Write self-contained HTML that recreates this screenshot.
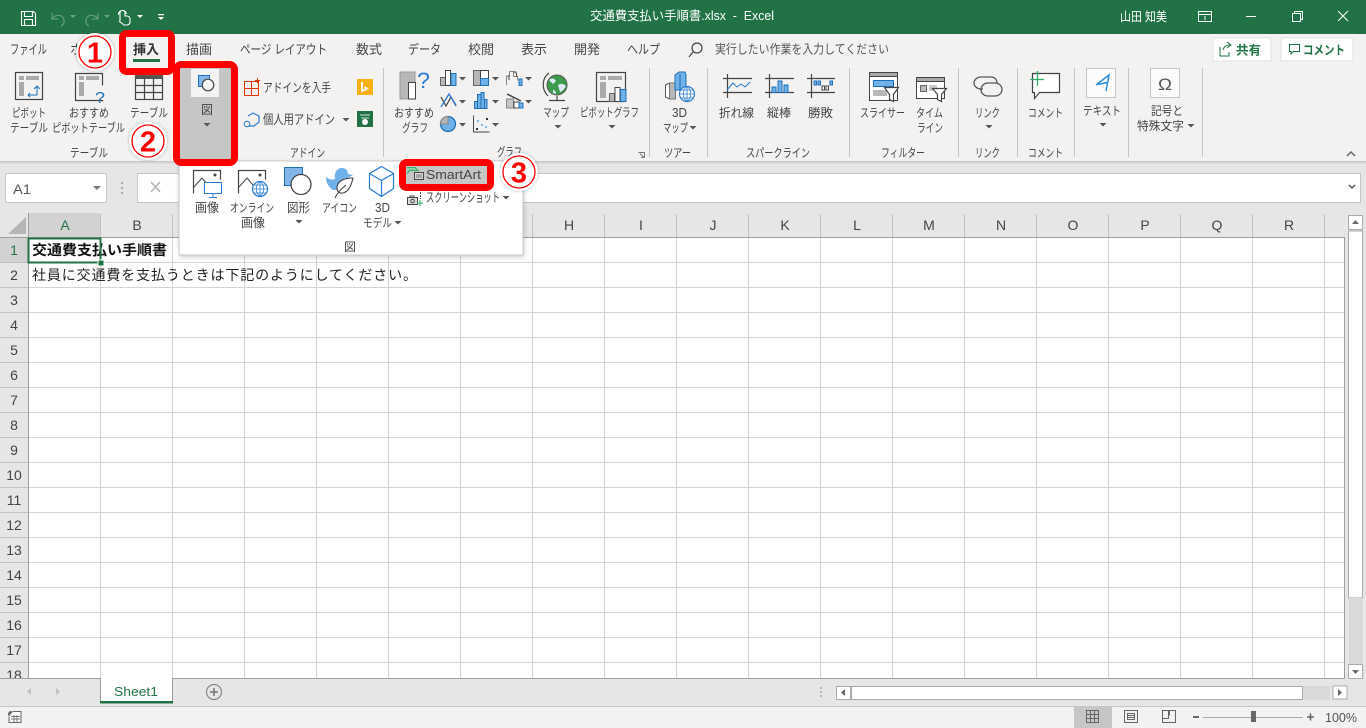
<!DOCTYPE html>
<html lang="ja"><head><meta charset="utf-8"><title>Excel</title>
<style>
html,body{margin:0;padding:0;background:#fff;overflow:hidden;width:1366px;height:728px}
svg{display:block}
text{font-family:"Liberation Sans","Noto Sans CJK JP",sans-serif;font-size:12px;fill:#444}
.h{font-size:14px;fill:#444;text-anchor:middle}
.r{font-size:14px;fill:#444;text-anchor:middle}
.n{font-weight:700;font-size:29px;fill:#f00;text-anchor:middle}
.s{fill:none;stroke:#444;stroke-width:1.2}
</style></head><body>
<svg xmlns="http://www.w3.org/2000/svg" width="1366" height="728" viewBox="0 0 1366 728">
<defs>
<path id="a" d="M-3.500 0h7l-3.500 3.500z" fill="#555"/>
</defs>
<!-- base bands -->
<rect width="1366" height="728" fill="#fff"/>
<rect width="1366" height="34" fill="#217346"/>
<rect y="34" width="1366" height="127" fill="#f3f2f1"/>
<rect y="161" width="1366" height="52" fill="#e6e6e6"/>
<rect y="161" width="1366" height="1" fill="#c9c9c9"/><rect y="162" width="1366" height="1" fill="#d5d5d5"/><rect y="163" width="1366" height="1" fill="#dedede"/>
<rect y="213" width="1345" height="24" fill="#e6e6e6"/>
<rect y="238" width="28" height="440" fill="#e6e6e6"/>
<rect x="28" y="213" width="72" height="24" fill="#d2d2d2"/>
<rect y="238" width="28" height="25" fill="#d2d2d2"/>
<path d="M26 217v17H8z" fill="#b5b5b5"/>

<!-- grid -->
<g stroke="#d4d4d4" stroke-width="1" shape-rendering="crispEdges">
<path d="M100.500 238V678M172.500 238V678M244.500 238V678M316.500 238V678M388.500 238V678M460.500 238V678M532.500 238V678M604.500 238V678M676.500 238V678M748.500 238V678M820.500 238V678M892.500 238V678M964.500 238V678M1036.500 238V678M1108.500 238V678M1180.500 238V678M1252.500 238V678M1324.500 238V678"/>
<path d="M29 262.500H1344M29 287.500H1344M29 312.500H1344M29 337.500H1344M29 362.500H1344M29 387.500H1344M29 412.500H1344M29 437.500H1344M29 462.500H1344M29 487.500H1344M29 512.500H1344M29 537.500H1344M29 562.500H1344M29 587.500H1344M29 612.500H1344M29 637.500H1344M29 662.500H1344"/>
</g>
<g stroke="#c2c2c2" shape-rendering="crispEdges">
<path d="M100.500 214V237M172.500 214V237M244.500 214V237M316.500 214V237M388.500 214V237M460.500 214V237M532.500 214V237M604.500 214V237M676.500 214V237M748.500 214V237M820.500 214V237M892.500 214V237M964.500 214V237M1036.500 214V237M1108.500 214V237M1180.500 214V237M1252.500 214V237M1324.500 214V237"/>
<path d="M0 262.500H28M0 287.500H28M0 312.500H28M0 337.500H28M0 362.500H28M0 387.500H28M0 412.500H28M0 437.500H28M0 462.500H28M0 487.500H28M0 512.500H28M0 537.500H28M0 562.500H28M0 587.500H28M0 612.500H28M0 637.500H28M0 662.500H28"/>
</g>
<path d="M0 237.500H1344.500V678.500H0M28.500 213V678" fill="none" stroke="#9e9e9e" shape-rendering="crispEdges"/>

<!-- column headers -->
<text class="h" x="65" y="230" style="fill:#217346">A</text><text class="h" x="137" y="230">B</text>
<text class="h" x="569" y="230">H</text><text class="h" x="641" y="230">I</text><text class="h" x="713" y="230">J</text><text class="h" x="785" y="230">K</text><text class="h" x="857" y="230">L</text><text class="h" x="929" y="230">M</text><text class="h" x="1001" y="230">N</text><text class="h" x="1073" y="230">O</text><text class="h" x="1145" y="230">P</text><text class="h" x="1217" y="230">Q</text><text class="h" x="1289" y="230">R</text>
<!-- row headers -->
<text class="r" x="14" y="255" style="fill:#217346">1</text><text class="r" x="14" y="280">2</text><text class="r" x="14" y="305">3</text><text class="r" x="14" y="330">4</text><text class="r" x="14" y="355">5</text><text class="r" x="14" y="380">6</text><text class="r" x="14" y="405">7</text><text class="r" x="14" y="430">8</text><text class="r" x="14" y="455">9</text><text class="r" x="14" y="480">10</text><text class="r" x="14" y="505">11</text><text class="r" x="14" y="530">12</text><text class="r" x="14" y="555">13</text><text class="r" x="14" y="580">14</text><text class="r" x="14" y="605">15</text><text class="r" x="14" y="630">16</text><text class="r" x="14" y="655">17</text><text class="r" x="14" y="680">18</text>
<rect x="0" y="678.500" width="1366" height="28" fill="#e6e6e6"/>
<path d="M0 678.500H1344.500" stroke="#9e9e9e" shape-rendering="crispEdges"/>

<!-- cell contents -->
<text x="32" y="255" textLength="135" lengthAdjust="spacingAndGlyphs" style="font-size:14px;font-weight:700;fill:#111">交通費支払い手順書</text>
<text x="32" y="280" textLength="385" lengthAdjust="spacing" style="font-size:14px;fill:#222">社員に交通費を支払うときは下記のようにしてください。</text>
<rect x="28.500" y="238.500" width="72" height="24" fill="none" stroke="#217346" stroke-width="2"/>
<rect x="98" y="260" width="6" height="6" fill="#217346" stroke="#fff"/>

<!-- title bar -->
<g fill="none" stroke="#fff" stroke-width="1.100">
<path d="M21.500 11.500h12l2 2v12h-14zM24.500 11.500v5h8v-5M24.500 25.500v-6h8v6"/>
<path d="M52 13v6h6M52 19c3-5 11-5 12 1 .5 3-1 5-3 6" stroke="#6ba384"/>
<path d="M98 13v6h-6M98 19c-3-5-11-5-12 1-.5 3 1 5 3 6" stroke="#6ba384"/>
<path d="M120 21v-8a2 2 0 0 1 5 0v3h2a3 3 0 0 1 3 3v3a3 3 0 0 1-3 3h-3l-5-4M118.500 15a4 4 0 1 1 8-1"/>
</g>
<g fill="#6ba384"><path d="M70 15h6l-3 3zM104 15h6l-3 3z"/></g>
<path d="M137 15h6l-3 3z" fill="#fff"/>
<path d="M158 14h6v1.200h-6zM158 17h6l-3 3z" fill="#fff"/>
<text x="590" y="20" textLength="184" lengthAdjust="spacingAndGlyphs" style="font-size:12.500px;fill:#fff">交通費支払い手順書.xlsx&#160;&#160;-&#160;&#160;Excel</text>
<text x="1120" y="21" textLength="47" lengthAdjust="spacingAndGlyphs" style="font-size:12.500px;fill:#fff">山田 知美</text>
<g fill="none" stroke="#fff" shape-rendering="crispEdges">
<path d="M1198.500 11.500h13v10h-13zM1198.500 14.500h13M1205 20v-4"/>
<path d="M1246 16.500h10"/>
<path d="M1292.500 13.500h8v8h-8zM1294.500 13.500v-2h8v8h-2"/>
</g>
<path d="M1338 11l10 10M1348 11l-10 10" stroke="#fff" fill="none"/>

<!-- tabs -->
<text x="10" y="54" textLength="37" lengthAdjust="spacingAndGlyphs" style="font-size:13px">ファイル</text>
<text x="70" y="54" textLength="38" lengthAdjust="spacingAndGlyphs" style="font-size:13px">ホーム</text>
<text x="186" y="54" textLength="26" lengthAdjust="spacingAndGlyphs" style="font-size:13px">描画</text>
<text x="240" y="54" textLength="87" lengthAdjust="spacingAndGlyphs" style="font-size:13px">ページ レイアウト</text>
<text x="356" y="54" textLength="26" lengthAdjust="spacingAndGlyphs" style="font-size:13px">数式</text>
<text x="408" y="54" textLength="33" lengthAdjust="spacingAndGlyphs" style="font-size:13px">データ</text>
<text x="468" y="54" textLength="26" lengthAdjust="spacingAndGlyphs" style="font-size:13px">校閲</text>
<text x="521" y="54" textLength="26" lengthAdjust="spacingAndGlyphs" style="font-size:13px">表示</text>
<text x="574" y="54" textLength="26" lengthAdjust="spacingAndGlyphs" style="font-size:13px">開発</text>
<text x="627" y="54" textLength="33" lengthAdjust="spacingAndGlyphs" style="font-size:13px">ヘルプ</text>
<circle cx="697" cy="48" r="5" class="s"/><path d="M693 52l-4 5" class="s"/>
<text x="715" y="53.500" textLength="174" lengthAdjust="spacingAndGlyphs" style="font-size:12.500px;fill:#555">実行したい作業を入力してください</text>

<rect x="1213" y="38" width="58" height="23" rx="1" fill="#fff" stroke="#e2e2e2"/>
<path d="M1220 47v9h9v-4M1223 50c1-4 4-5 7-5M1227 42l4 3-4 3" fill="none" stroke="#217346"/>
<text x="1236" y="54.500" textLength="25" lengthAdjust="spacingAndGlyphs" style="font-size:12.500px;font-weight:700;fill:#217346">共有</text>
<rect x="1281" y="38" width="72" height="23" rx="1" fill="#fff" stroke="#e2e2e2"/>
<path d="M1289.500 44.500h10v7h-6l-2.500 2.500v-2.500h-1.500z" fill="none" stroke="#217346"/>
<text x="1303" y="54.500" textLength="42" lengthAdjust="spacingAndGlyphs" style="font-size:12.500px;font-weight:700;fill:#217346">コメント</text>

<!-- group separators -->
<path d="M383.500 68V157M649.500 68V157M707.500 68V157M849.500 68V157M958.500 68V157M1017.500 68V157M1074.500 68V157M1128.500 68V157M1202.500 68V157" stroke="#c6c6c6" shape-rendering="crispEdges"/>

<!-- table group -->
<rect x="15.500" y="72.500" width="27" height="27" fill="#fff" class="s"/>
<rect x="19" y="76" width="5" height="4" fill="#aaa"/><rect x="26" y="76" width="13" height="4" fill="#aaa"/><rect x="19" y="82" width="5" height="14" fill="#aaa"/>
<path d="M28 95h9v-8M34 89l3-3 3 3M28 95l2-2M28 95l2 2" fill="none" stroke="#1d70b8"/>
<text x="12" y="117" textLength="34" lengthAdjust="spacingAndGlyphs">ピボット</text>
<text x="10" y="132" textLength="38" lengthAdjust="spacingAndGlyphs">テーブル</text>
<path d="M103 100.500h-27.500v-27h27v12" class="s"/>
<rect x="79" y="76" width="5" height="4" fill="#aaa"/><rect x="86" y="76" width="13" height="4" fill="#aaa"/><rect x="79" y="82" width="5" height="14" fill="#aaa"/>
<text x="95" y="103" style="font-size:16px;fill:#1d70b8" textLength="10" lengthAdjust="spacingAndGlyphs">?</text>
<text x="69" y="117" textLength="40" lengthAdjust="spacingAndGlyphs">おすすめ</text>
<text x="52" y="132" textLength="73" lengthAdjust="spacingAndGlyphs">ピボットテーブル</text>
<rect x="135.500" y="75.500" width="27" height="24" fill="#fff" class="s"/>
<rect x="135" y="75" width="28" height="4" fill="#555"/>
<path d="M135 85.500h28M135 92.500h28M144.500 79v21M153.500 79v21" class="s"/>
<text x="130" y="117" textLength="38" lengthAdjust="spacingAndGlyphs">テーブル</text>
<text x="70" y="157" textLength="38" lengthAdjust="spacingAndGlyphs">テーブル</text>

<!-- add-ins group -->
<path d="M244.500 81.500v14h14v-14zM251.500 81.500v14M244.500 88.500h14" fill="none" stroke="#d83b01"/>
<path d="M255 80.500h5M257.500 78v5" stroke="#d83b01"/>
<text x="263" y="92" textLength="68" lengthAdjust="spacingAndGlyphs" style="font-size:12.500px">アドインを入手</text>
<rect x="357" y="79" width="16" height="16" fill="#fbb116"/>
<path d="M362 82v9l5-2.500-2.500-1.500" fill="none" stroke="#fff" stroke-width="1.800"/>
<path d="M248 116l5-3 6 3v6l-5 4h-5" fill="none" stroke="#2b7cd3" stroke-width="1.200"/>
<circle cx="247" cy="124" r="2.800" fill="none" stroke="#2b7cd3"/>
<text x="263" y="124" textLength="72" lengthAdjust="spacingAndGlyphs" style="font-size:13px">個人用アドイン</text>
<use href="#a" x="346" y="118"/>
<rect x="357" y="111" width="16" height="16" fill="#217346"/>
<path d="M360 115h10M361 118h8" stroke="#cfe5d8"/><circle cx="365" cy="122" r="3" fill="#fff"/>
<text x="290" y="157" textLength="35" lengthAdjust="spacingAndGlyphs">アドイン</text>

<!-- chart group -->
<rect x="400" y="72" width="15" height="27" fill="#b7b7b7" stroke="#999"/><rect x="408.500" y="82.500" width="7" height="16.500" fill="#fff" stroke="#444"/>
<text x="417" y="88" style="font-size:22px;fill:#2b7cd3" textLength="13" lengthAdjust="spacingAndGlyphs">?</text>
<text x="394" y="117" textLength="40" lengthAdjust="spacingAndGlyphs">おすすめ</text>
<text x="402" y="132" textLength="26" lengthAdjust="spacingAndGlyphs">グラフ</text>
<!-- small chart icons -->
<rect x="440.500" y="77.500" width="5" height="8" fill="#b7b7b7" stroke="#666"/><rect x="445.500" y="70.500" width="5" height="15" fill="#fff" stroke="#444"/><rect x="451" y="73.500" width="5" height="12" fill="#6fb1e8" stroke="#1d70b8"/>
<use href="#a" x="462.500" y="77"/>
<rect x="473.500" y="70.500" width="7" height="15" fill="#b7b7b7" stroke="#666"/><rect x="480.500" y="70.500" width="8" height="8" fill="#fff" stroke="#444"/><rect x="480.500" y="78.500" width="8" height="7" fill="#6fb1e8" stroke="#1d70b8"/>
<use href="#a" x="495.500" y="77"/>
<path d="M506.500 85v-9h3v-4.500h4v5h4v4" fill="none" stroke="#888"/><path d="M509 80v-5M513 72h3l1 5" fill="none" stroke="#444"/><rect x="519" y="79" width="3" height="6.500" fill="#6fb1e8" stroke="#1d70b8"/>
<use href="#a" x="528.500" y="77"/>
<path d="M441 97l5 9 5-9 5 9" fill="none" stroke="#444" stroke-width="1.200"/><path d="M441 107l8-13 7 11" fill="none" stroke="#2b7cd3" stroke-width="1.300"/>
<use href="#a" x="462.500" y="100"/>
<path d="M474.500 108.500v-7h3v-7h3.500v-2h3v7h3v9z" fill="#6fb1e8" stroke="#1d70b8"/><path d="M477.500 102v6M481 95v13M484.500 99v9" stroke="#1d70b8"/>
<use href="#a" x="495.500" y="100"/>
<rect x="506.500" y="99" width="7" height="9" fill="#c6c6c6" stroke="#888"/><rect x="514" y="102" width="5" height="6" fill="#fff" stroke="#444"/><rect x="519" y="103" width="4" height="5" fill="#6fb1e8" stroke="#1d70b8"/>
<path d="M507 94l14 7" stroke="#444" stroke-width="1.500"/>
<use href="#a" x="528.500" y="100"/>
<circle cx="448" cy="124" r="7.500" fill="#6fb1e8" stroke="#1d70b8" stroke-width="1.300"/><path d="M448 124v-7.500a7.500 7.500 0 0 0-7.500 7.500z" fill="#b7b7b7" stroke="#888"/>
<use href="#a" x="462.500" y="123"/>
<path d="M473.500 115.500v16.500h16" fill="none" stroke="#444"/><rect x="476" y="128" width="2" height="2" fill="#333"/><rect x="486" y="118" width="2" height="2" fill="#333"/><rect x="477" y="120" width="2" height="2" fill="#7bb7ea"/><rect x="481" y="124" width="2" height="2" fill="#7bb7ea"/><rect x="485" y="126" width="2" height="2" fill="#7bb7ea"/>
<use href="#a" x="495.500" y="123"/>
<!-- globe -->
<circle cx="557" cy="85" r="10" fill="#3f9b4c" stroke="#555"/>
<path d="M549 80c3-3 6-1 7 1l-3 3zM558 85c3-2 6-1 8 1-2 4-5 6-6 6zM553 90c2 0 3 2 3 4l-3-1z" fill="#dcebf7"/>
<path d="M549 73c-7 5-8 16-1 23" class="s"/><path d="M557 96v4M549 100.500h16" class="s"/>
<text x="543" y="116.500" textLength="26" lengthAdjust="spacingAndGlyphs">マップ</text>
<use href="#a" x="558" y="125"/>
<!-- pivot chart -->
<rect x="596.500" y="72.500" width="29" height="29" fill="#f9f9f9" class="s"/>
<rect x="600" y="76" width="6" height="4" fill="#aaa"/><rect x="608" y="76" width="14" height="4" fill="#aaa"/><rect x="600" y="82" width="6" height="16" fill="#aaa"/>
<rect x="609.500" y="93.500" width="5" height="8" fill="#b7b7b7" stroke="#666"/><rect x="615" y="87.500" width="5" height="14" fill="#fff" stroke="#444"/><rect x="620.500" y="89.500" width="5.500" height="12" fill="#6fb1e8" stroke="#1d70b8"/>
<text x="580" y="116.500" textLength="59" lengthAdjust="spacingAndGlyphs">ピボットグラフ</text>
<use href="#a" x="612" y="125"/>
<text x="497" y="156" textLength="25" lengthAdjust="spacingAndGlyphs">グラフ</text>
<path d="M638.500 152.500h6v5M640 153.500l4 4M641 157.500h3.500" fill="none" stroke="#777"/>
<!-- 3D map -->
<path d="M665.500 85l4-2v16l-4-2z" fill="#fff" stroke="#555"/><path d="M669.500 83h6v16h-6z" fill="#b7b7b7" stroke="#777"/>
<path d="M675 75l4-3h6l1 3v15h-11z" fill="#6fb1e8" stroke="#1d70b8"/><path d="M680 74v16" stroke="#1d70b8"/>
<circle cx="687" cy="94" r="7.500" fill="#fff" stroke="#2b7cd3" stroke-width="1.200"/><path d="M679.500 94h15M681 90h12M681 98h12M687 86.500v15M687 86.500c-5 4-5 11 0 15M687 86.500c5 4 5 11 0 15" fill="none" stroke="#2b7cd3" stroke-width=".8"/>
<text x="672" y="117" textLength="15" lengthAdjust="spacingAndGlyphs" style="font-size:12.500px">3D</text>
<text x="663" y="132" textLength="25" lengthAdjust="spacingAndGlyphs">マップ</text>
<use href="#a" x="693" y="126"/>
<text x="664" y="157" textLength="27" lengthAdjust="spacingAndGlyphs">ツアー</text>
<!-- sparklines -->
<path d="M723 78.500h29M723 92.500h29M727.500 74v24" class="s"/>
<path d="M727 90l6-7 4 4 4-3 4 3 5-5" fill="none" stroke="#2b7cd3"/>
<text x="719" y="117" textLength="35" lengthAdjust="spacingAndGlyphs">折れ線</text>
<path d="M765 78.500h29M765 92.500h29M769.500 74v24" class="s"/>
<rect x="772" y="87" width="4" height="5.500" fill="#6fb1e8" stroke="#1d70b8"/><rect x="778" y="81" width="4" height="11.500" fill="#6fb1e8" stroke="#1d70b8"/><rect x="784" y="85" width="4" height="7.500" fill="#6fb1e8" stroke="#1d70b8"/>
<text x="767" y="117" textLength="24" lengthAdjust="spacingAndGlyphs">縦棒</text>
<path d="M807 78.500h28M807 92.500h28M811.500 74v24" class="s"/>
<rect x="814" y="81" width="2.500" height="4" fill="#6fb1e8" stroke="#1d70b8"/><rect x="818" y="81" width="2.500" height="4" fill="#6fb1e8" stroke="#1d70b8"/><rect x="822" y="86" width="2.500" height="4" fill="#fff" stroke="#444"/><rect x="826" y="86" width="2.500" height="4" fill="#fff" stroke="#444"/><rect x="830" y="81" width="2.500" height="4" fill="#6fb1e8" stroke="#1d70b8"/>
<text x="808" y="117" textLength="25" lengthAdjust="spacingAndGlyphs">勝敗</text>
<text x="746" y="157" textLength="64" lengthAdjust="spacingAndGlyphs">スパークライン</text>
<!-- filters -->
<rect x="869.500" y="72.500" width="28" height="28" fill="#fff" stroke="#444"/>
<rect x="869.500" y="72.500" width="28" height="4" fill="#aaa" stroke="#444"/>
<rect x="873.500" y="80.500" width="20" height="6" fill="#6fb1e8" stroke="#1d70b8"/>
<rect x="873" y="90" width="14" height="6" fill="#b7b7b7"/>
<path d="M884.500 87.500h14l-5 7v7l-4-2v-5z" fill="#fff" stroke="#444" stroke-width="1.200"/>
<rect x="916.500" y="77.500" width="28" height="21" fill="#fff" stroke="#444"/><rect x="916.500" y="77.500" width="28" height="4" fill="#aaa" stroke="#444"/>
<rect x="920.500" y="85.500" width="6" height="6" fill="#b7b7b7" stroke="#666"/><rect x="929" y="85" width="8" height="6" fill="#c9c9c9"/>
<path d="M932.500 88.500h14l-5 6v7l-4-2v-5z" fill="#fff" stroke="#444" stroke-width="1.200"/>
<text x="860" y="117" textLength="45" lengthAdjust="spacingAndGlyphs">スライサー</text>
<text x="916" y="117" textLength="27" lengthAdjust="spacingAndGlyphs">タイム</text>
<text x="917" y="132" textLength="26" lengthAdjust="spacingAndGlyphs">ライン</text>
<text x="881" y="157" textLength="44" lengthAdjust="spacingAndGlyphs">フィルター</text>
<!-- link -->
<path d="M997 83c0-3-2-6-6-6h-10c-4 0-7 3-7 6s3 6 7 6h2" fill="none" stroke="#555" stroke-width="1.300"/>
<path d="M981 90c0-4 3-7 7-7h7c4 0 7 3 7 6.500s-3 6.500-7 6.500h-7c-4 0-7-3-7-6z" fill="none" stroke="#555" stroke-width="1.300"/>
<text x="975" y="117" textLength="25" lengthAdjust="spacingAndGlyphs">リンク</text>
<use href="#a" x="989" y="125"/>
<text x="975" y="157" textLength="25" lengthAdjust="spacingAndGlyphs">リンク</text>
<!-- comment -->
<path d="M1032.500 73.500h27v19h-20l-5 6v-6h-2z" fill="#fff" stroke="#444" stroke-width="1.200"/>
<path d="M1030 79.500h14M1037.500 71v15" stroke="#2eae65" stroke-width="1.300"/>
<text x="1028" y="117" textLength="35" lengthAdjust="spacingAndGlyphs">コメント</text>
<text x="1028" y="157" textLength="35" lengthAdjust="spacingAndGlyphs">コメント</text>
<!-- text -->
<rect x="1086.500" y="68.500" width="29" height="29" fill="#fbfbfb" stroke="#c6c6c6"/>
<path d="M1096 85L1109 75L1106 91M1098 84.500L1107 82.500" fill="none" stroke="#2b8ddb" stroke-width="1.500"/>
<text x="1083" y="115" textLength="38" lengthAdjust="spacingAndGlyphs">テキスト</text>
<use href="#a" x="1103" y="123"/>
<!-- symbols -->
<rect x="1150.500" y="68.500" width="29" height="29" fill="#fbfbfb" stroke="#c6c6c6"/>
<text x="1158" y="90" style="font-size:17px;fill:#555" textLength="14" lengthAdjust="spacingAndGlyphs">Ω</text>
<text x="1151" y="115" textLength="32" lengthAdjust="spacingAndGlyphs">記号と</text>
<text x="1137" y="130" textLength="47" lengthAdjust="spacingAndGlyphs">特殊文字</text>
<use href="#a" x="1191" y="124"/>
<path d="M1347 156l4-4 4 4" fill="none" stroke="#666" stroke-width="1.500"/>

<!-- formula bar -->
<rect x="5.500" y="173.500" width="101" height="29" fill="#fff" stroke="#c6c6c6"/>
<text x="13" y="194" textLength="18" lengthAdjust="spacingAndGlyphs" style="font-size:14px;fill:#555">A1</text>
<path d="M93 186h8l-4 4z" fill="#777"/>
<path d="M122 182v2M122 187v2M122 192v2" stroke="#999" stroke-width="1.500"/>
<rect x="137.500" y="173.500" width="1223" height="29" fill="#fff" stroke="#c6c6c6"/>
<path d="M151 182l9 10M160 182l-9 10" stroke="#b5b5b5" stroke-width="1.600"/>
<path d="M1349 185l3 3 3-3" fill="none" stroke="#666" stroke-width="1.600"/>

<!-- popup -->
<rect x="179" y="161" width="344" height="94" fill="#fff" stroke="#c9c9c9" style="filter:drop-shadow(1px 2px 2px rgba(0,0,0,.18))"/>
<path d="M193.500 193.500v-23h27v9" class="s"/><path d="M194 187l8-9 6 7" fill="none" stroke="#444"/><circle cx="215" cy="175" r="1.500" fill="#444"/>
<rect x="204.500" y="182.500" width="17" height="11" fill="#fff" stroke="#2b7cd3"/><path d="M213 194v3M209 197.500h8" stroke="#2b7cd3"/>
<text x="195" y="212" textLength="24" lengthAdjust="spacingAndGlyphs" style="font-size:12.500px">画像</text>
<path d="M238.500 193.500v-23h27v9" class="s"/><path d="M239 187l8-9 6 7" fill="none" stroke="#444"/><circle cx="260" cy="175" r="1.500" fill="#444"/>
<circle cx="260" cy="189" r="7.500" fill="#fff" stroke="#2b7cd3" stroke-width="1.200"/><path d="M252.500 189h15M254 185h12M254 193h12M260 181.500v15M260 181.500c-5 4-5 11 0 15M260 181.500c5 4 5 11 0 15" fill="none" stroke="#2b7cd3" stroke-width=".8"/>
<text x="230" y="212" textLength="44" lengthAdjust="spacingAndGlyphs">オンライン</text>
<text x="241" y="227" textLength="24" lengthAdjust="spacingAndGlyphs" style="font-size:12.500px">画像</text>
<rect x="284.500" y="167.500" width="18" height="18" fill="#82b5ea" stroke="#1d70b8"/>
<circle cx="301" cy="184.500" r="10" fill="#fff" stroke="#444" stroke-width="1.300"/>
<text x="287" y="212" textLength="23" lengthAdjust="spacingAndGlyphs" style="font-size:12.500px">図形</text>
<use href="#a" x="299" y="220"/>
<path d="M326 177c4 3 7 3 9 2-1-7 2-11 7-11 4 0 6 3 6 6l5 1-5 3c-1 2-2 3-4 4l-7 8h-4c-5-3-7-8-7-13z" fill="#6fb1e8"/>
<path d="M353 178c-9 0-16 3-16 10 0 2 1 4 3 5 7 1 11-6 13-15zM335 198c2-5 6-9 11-13" fill="#fff" stroke="#444" stroke-width="1.100"/>
<text x="322" y="212" textLength="35" lengthAdjust="spacingAndGlyphs">アイコン</text>
<path d="M381.500 166.500l12 7v15l-12 8-12-8v-15zM369.500 173.500l12 7 12-7M381.500 180.500v16" fill="#fff" stroke="#2b7cd3" stroke-width="1.200"/>
<text x="375" y="212" textLength="15" lengthAdjust="spacingAndGlyphs" style="font-size:12.500px">3D</text>
<text x="363" y="227" textLength="29" lengthAdjust="spacingAndGlyphs">モデル</text>
<use href="#a" x="398" y="221"/>
<text x="344" y="251" textLength="12" lengthAdjust="spacingAndGlyphs">図</text>
<!-- screenshot row -->
<path d="M407.500 197.500h10v7h-10z" fill="#ddd" stroke="#444"/><circle cx="412.500" cy="201" r="1.800" fill="none" stroke="#444"/><path d="M410 197v-1h4v1" stroke="#444" fill="none"/>
<path d="M420.500 192v7" stroke="#555" stroke-dasharray="2 1"/><path d="M417 203h6M420 200v6" stroke="#2eae65"/>
<text x="426" y="202" textLength="74" lengthAdjust="spacingAndGlyphs" style="font-size:13px">スクリーンショット</text>
<use href="#a" x="506" y="196"/>

<!-- highlighted buttons -->
<rect x="176.500" y="64.500" width="58" height="98" rx="5" fill="#c6c6c6" stroke="#f00" stroke-width="7"/>
<rect x="191" y="69" width="28" height="28" fill="#f3f3f3"/>
<rect x="198.500" y="75.500" width="11" height="11" fill="#82b5ea" stroke="#1d70b8"/>
<circle cx="208" cy="85" r="5.800" fill="#f3f3f3" stroke="#444" stroke-width="1.200"/>
<text x="201" y="114" textLength="12" lengthAdjust="spacingAndGlyphs" style="font-size:12.500px">図</text>
<use href="#a" x="207" y="123"/>

<rect x="122.500" y="33.500" width="49" height="38" rx="4" fill="#f3f2f1" stroke="#f00" stroke-width="7"/>
<text x="133" y="54" textLength="26" lengthAdjust="spacingAndGlyphs" style="font-size:13px;font-weight:700;fill:#333">挿入</text>
<rect x="133" y="59" width="27" height="3" fill="#217346"/>

<rect x="402.500" y="162.500" width="88" height="25" rx="4" fill="#c6c6c6" stroke="#f00" stroke-width="7"/>
<path d="M407 167.500h8l3 3h-8l-3 3" fill="#8fd0a6" stroke="#2eae65"/>
<rect x="414.500" y="172.500" width="9" height="7" fill="#ddd" stroke="#444"/><path d="M416 175h6M416 177h6" stroke="#444" stroke-width=".7"/>
<text x="426" y="179" textLength="55" lengthAdjust="spacingAndGlyphs" style="font-size:12.500px;fill:#444">SmartArt</text>

<!-- number badges -->
<g style="filter:drop-shadow(0 0 1.500px rgba(0,0,0,.25))">
<circle cx="95" cy="52" r="19" fill="#fff"/><circle cx="148" cy="141" r="19" fill="#fff"/><circle cx="519" cy="172" r="19" fill="#fff"/>
</g>
<g fill="none" stroke="#f00" stroke-width="1.300">
<circle cx="95" cy="52" r="16"/><circle cx="148" cy="141" r="16"/><circle cx="519" cy="172" r="16"/>
</g>
<text class="n" x="95" y="62.500">1</text>
<text class="n" x="148" y="151.500">2</text>
<text class="n" x="519" y="182.500">3</text>

<!-- vertical scrollbar -->
<rect x="1345" y="213" width="21" height="493" fill="#e6e6e6"/>
<rect x="1348.500" y="231" width="14" height="367" fill="#fff" stroke="#ababab"/>
<rect x="1349" y="598" width="14" height="66" fill="#d9d9d9"/>
<rect x="1348.500" y="215.500" width="14" height="14" fill="#fff" stroke="#ababab"/><path d="M1352 224h7l-3.500-4z" fill="#666"/>
<rect x="1348.500" y="664.500" width="14" height="14" fill="#fff" stroke="#ababab"/><path d="M1352 670h7l-3.500 4z" fill="#666"/>

<!-- sheet tabs -->
<rect x="100.500" y="678" width="72" height="25" fill="#fff"/>
<path d="M100.500 678v25M172.500 678v25" stroke="#9e9e9e"/>
<rect x="100" y="701" width="73" height="2.500" fill="#217346"/>
<text x="114" y="696" textLength="44" lengthAdjust="spacingAndGlyphs" style="font-size:13px;fill:#217346">Sheet1</text>
<path d="M31 688v7l-4-3.500z" fill="#c2c2c2"/><path d="M56 688v7l4-3.500z" fill="#c2c2c2"/>
<circle cx="214" cy="692" r="7.500" fill="none" stroke="#888" stroke-width="1.200"/><path d="M210 692h8M214 688v8" stroke="#777" stroke-width="1.500"/>
<path d="M821 687v2M821 691v2M821 695v2" stroke="#aaa" stroke-width="1.500"/>
<!-- horizontal scrollbar -->
<rect x="836.500" y="686.500" width="14" height="13" fill="#fff" stroke="#ababab"/><path d="M845 689v7l-4-3.500z" fill="#666"/>
<rect x="851.500" y="686.500" width="451" height="13" fill="#fff" stroke="#ababab"/>
<rect x="1303" y="686" width="27" height="14" fill="#d9d9d9"/>
<rect x="1333" y="686" width="14" height="13" fill="#fff" stroke="#ababab"/><path d="M1338 689v7l4-3.500z" fill="#666"/>

<!-- status bar -->
<rect y="706" width="1366" height="22" fill="#f3f2f1"/>
<rect y="706" width="1366" height="1" fill="#c6c6c6"/>
<circle cx="11" cy="714" r="3" fill="#666"/><path d="M13 711.500h8v11H9v-6" fill="#fff" stroke="#666"/><path d="M11 716.500h9M11 719h9M14 715v7M17 715v7" stroke="#777" stroke-width=".9"/>
<rect x="1074" y="707" width="38" height="21" fill="#c6c6c6"/>
<path d="M1086.500 710.500h12v12h-12zM1086.500 714.500h12M1086.500 718.500h12M1090.500 710.500v12M1094.500 710.500v12" fill="none" stroke="#666" shape-rendering="crispEdges"/>
<path d="M1124.500 710.500h13v12h-13zM1127.500 713.500h7v6h-7zM1128 715.500h6M1128 717.500h6" fill="none" stroke="#666" shape-rendering="crispEdges"/>
<path d="M1162.500 710.500h13v12h-13zM1162.500 718.500h6v-8M1169.500 710.500v5" fill="none" stroke="#666" shape-rendering="crispEdges"/>
<rect x="1193" y="716" width="6" height="2" fill="#666"/>
<rect x="1203" y="717" width="100" height="1" fill="#aaa"/>
<rect x="1251" y="711" width="5" height="11" fill="#666"/>
<path d="M1307 717h7M1310.500 713.500v7" stroke="#666" stroke-width="1.600"/>
<text x="1325" y="722" textLength="32" lengthAdjust="spacingAndGlyphs" style="font-size:13px;fill:#555">100%</text>
</svg>
</body></html>
